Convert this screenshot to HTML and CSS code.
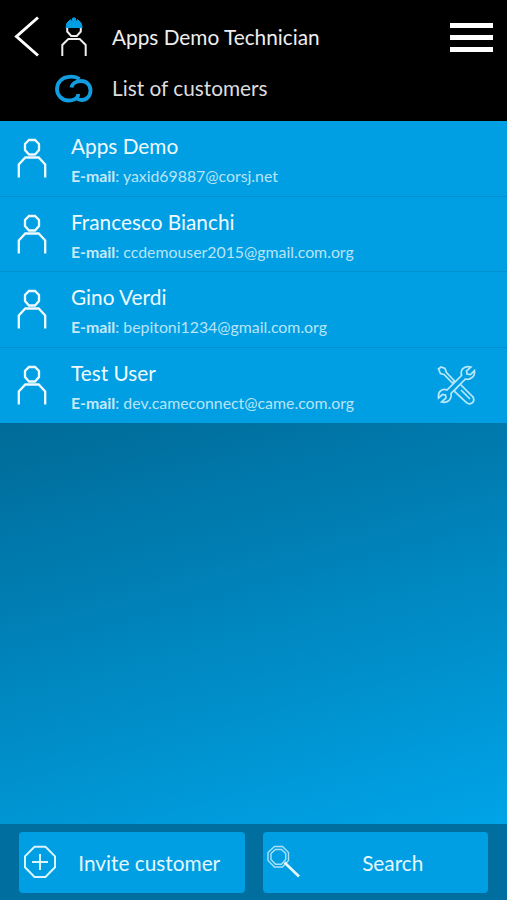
FILE: index.html
```html
<!DOCTYPE html>
<html lang="en">
<head>
<meta charset="utf-8">
<title>List of customers</title>
<link rel="stylesheet" href="styles.css">
</head>
<body>
<svg class="defs" width="0" height="0" aria-hidden="true">
  <symbol id="person" viewBox="0 0 32 44">
    <path d="M13 3h6l4 4v6l-4 4.500h-6L9 13V7zM2.800 40.500V27.500l6.500-7h13.400l6.500 7v13"/>
  </symbol>
</svg>
<div class="app">
  <header class="header">
    <div class="bar">
      <svg class="back" viewBox="0 0 28 44"><path d="M25 3.500 3.500 22.500 25 41.500"/></svg>
      <svg class="worker" viewBox="0 0 32 44">
        <path class="line" d="M9.200 12v4.500l4 4.500h5.600l4-4.500V12M4.300 41V30l6-6h11.400l6 6v11"/>
        <path class="helmet" d="M8 12.500 9 8l3.500-3.500 1.500 3 .7-4.500h2.600l.7 4.500 1.500-3L23 8l1.200 4.500z"/>
      </svg>
      <h1 class="name">Apps Demo Technician</h1>
      <div class="menu"><i></i><i></i><i></i></div>
    </div>
    <div class="bar sub">
      <svg class="logo" viewBox="0 0 40 32"><path d="M25.500 7C22 4.600 18 4.300 14.500 4.900 8 5.500 3 10.500 3 17s5 11.500 11.500 11.500c5 0 8-1.500 9.500-4.500v-2"/><path d="M17.500 15.500c.5-4 5-6.500 9.500-6.500 5.500 0 9.500 4 9.500 9.500S32.500 28 27.500 28c-2 0-3.500-.5-5-1.500"/></svg>
      <h2 class="name">List of customers</h2>
    </div>
  </header>
  <ul class="list">
    <li class="row"><svg class="person"><use href="#person"/></svg><div class="info"><div class="title">Apps Demo</div><div class="mail"><b>E-mail</b>: yaxid69887@corsj.net</div></div></li>
    <li class="row"><svg class="person"><use href="#person"/></svg><div class="info"><div class="title">Francesco Bianchi</div><div class="mail"><b>E-mail</b>: ccdemouser2015@gmail.com.org</div></div></li>
    <li class="row"><svg class="person"><use href="#person"/></svg><div class="info"><div class="title">Gino Verdi</div><div class="mail"><b>E-mail</b>: bepitoni1234@gmail.com.org</div></div></li>
    <li class="row"><svg class="person"><use href="#person"/></svg><div class="info"><div class="title">Test User</div><div class="mail"><b>E-mail</b>: dev.cameconnect@came.com.org</div></div>
      <svg class="tools" viewBox="0 0 40 40">
        <path d="M2.500 4 5 2l4 1.500 1.500 4L18.500 16l-2 2-8.500-8.500-3.500-1zM24 19l13 13q2 4-1 6t-5.500-.5L18 26zM25 25l9 9"/>
        <path class="wrench" d="M25.500 10.500Q24 5 28.500 2.500 31.500 1 35 2l-4.500 4 .5 3 3.500.5L38.500 5.500q.5 5-2.500 7-3 2.500-6.500 1.500L15 28.500q1 4-2 7-3 2.500-7.500 1.500L10 33l-.5-3-3-.5L2.500 33q-.5-5 2-7 3-2.500 6.500-1z"/>
      </svg>
    </li>
  </ul>
  <main class="space"></main>
  <footer class="footer">
    <button class="btn"><svg class="bicon" viewBox="0 0 36 36"><path d="M12.500 2.800h11l9.500 9.500v11L23.500 33h-11L3 23.300v-11zM18 10v16M10 18h16"/></svg><span>Invite customer</span></button>
    <button class="btn"><svg class="bicon search" viewBox="0 0 36 36"><path d="M8.500 2.500h8L22.500 8.500v8l-6 6.500h-8L2 16.500v-8z"/><path d="M9.500 5.500h6L19.700 9.500v6l-4.200 4.700h-6L5 15.500v-6z"/><path class="handle" d="M18.500 18.500 33 32.500"/></svg><span>Search</span></button>
  </footer>
</div>
</body>
</html>
```
FILE: styles.css
```css
* { box-sizing: border-box; }
body { margin: 0; font-family: Lato, "Liberation Sans", sans-serif; color: #fff; }
svg { display: block; flex: none; fill: none; stroke: #fff; stroke-width: 2; }
.defs { position: absolute; }
.app { width: 507px; height: 900px; display: flex; flex-direction: column; overflow: hidden; }
.header { height: 121px; flex: none; background: #000; padding-top: 12px; }
.bar { display: flex; height: 50px; padding: 0 14px 0 13px; align-items: center; }
.back { width: 28px; height: 44px; margin-top: -2px; stroke-width: 3; }
.worker { width: 32px; height: 44px; margin-left: 17px; }
.worker .line { stroke: #eee; }
.helmet { fill: #009fe3; stroke: #009fe3; stroke-width: 1; }
.name { margin: 0 0 0 22px; font-size: 20.8px; line-height: 30px; font-weight: 400; color: #eee; white-space: nowrap; }
.menu { margin-left: auto; width: 43px; display: flex; flex-direction: column; gap: 7px; }
.menu i { height: 5px; background: #fff; }
.sub { padding-top: 1px; }
.sub .logo { width: 40px; height: 32px; margin-left: 41px; stroke: #129de0; stroke-width: 3.8; }
.sub .name { margin-left: 18px; color: #ddd; }
.list { list-style: none; margin: 0; padding: 0; flex: none; background: #009fe3; }
.row { height: 75.6px; display: flex; border-bottom: 1.5px solid #0090cf; padding: 0 31px 0 16px; }
.row:last-child { border-bottom: 0; }
.person { width: 32px; height: 44px; margin-top: 16px; stroke-width: 2.3; stroke: #effaff; }
.info { margin-left: 23px; padding-top: 10px; white-space: nowrap; }
.title { font-size: 20.8px; line-height: 29px; color: #effaff; }
.mail { font-size: 15.85px; line-height: 22px; margin-top: 5px; color: #b9e4f8; }
.mail b { color: #c7e9f9; }
.tools { width: 40px; height: 40px; margin: 17px 0 0 auto; stroke: #b9e7fb; stroke-width: 1.7; }
.tools .wrench { fill: #009fe3; }
.space { flex: 1; background: linear-gradient(165deg, #006b98 0%, #007eb3 35%, #00a4e8 100%); }
.footer { height: 76px; flex: none; display: flex; gap: 18px; padding: 8px 19px; background: #006f9f; }
.btn { flex: 1; height: 61px; display: flex; align-items: center; padding: 0 4px 0 3px; border: 0; border-radius: 4px; background: #009fe3; color: #e4f8ff; font: 20.8px Lato, "Liberation Sans", sans-serif; }
.btn span { flex: 1; text-align: center; white-space: nowrap; }
.bicon { width: 36px; height: 36px; margin-top: -1px; stroke: #d9f5ff; }
.search { stroke-width: 1.4; stroke: #a9e0f8; }
.search .handle { stroke-width: 2.6; stroke: #e4f8ff; }
```
